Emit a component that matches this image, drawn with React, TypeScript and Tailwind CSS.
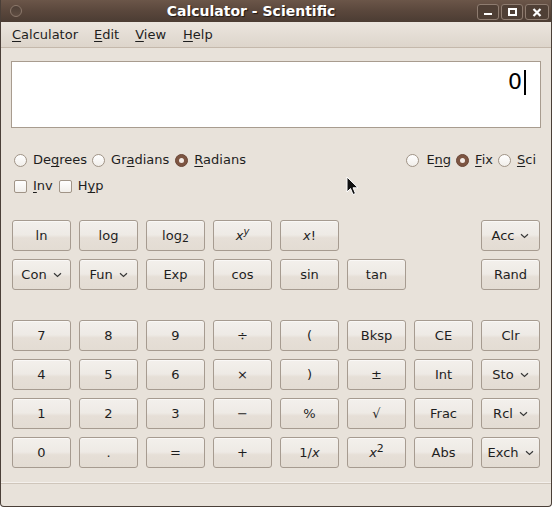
import React from 'react';

const font = "font-['DejaVu_Sans',sans-serif]";

const Chevron = () => (
  <svg width="9" height="6" viewBox="0 0 9 6" className="shrink-0">
    <path d="M1 1.2 L4.5 4.5 L8 1.2" fill="none" stroke="#3a3a3a" strokeWidth="1.2" />
  </svg>
);

const Btn = ({ children, drop = false }: { children: React.ReactNode; drop?: boolean }) => (
  <button className="h-[31px] rounded-[3px] border border-[#a69b90] bg-[linear-gradient(180deg,#f3f0ec_0%,#eeeae5_48%,#e6dfd7_58%,#e3dcd3_100%)] shadow-[inset_0_1px_0_#faf8f6] text-[13px] text-[#1e1e1e] flex items-center justify-center gap-[6px] leading-none">
    {children}
    {drop && <Chevron />}
  </button>
);

const Radio = ({ on = false }: { on?: boolean }) =>
  on ? (
    <span className="w-[13px] h-[13px] rounded-full bg-[#7d5542] border border-[#6a4636] flex items-center justify-center shrink-0">
      <span className="w-[5px] h-[5px] rounded-full bg-[#f3ebe6]" />
    </span>
  ) : (
    <span className="block w-[13px] h-[13px] rounded-full bg-[linear-gradient(180deg,#ffffff,#f1eeea)] border border-[#a09487] shrink-0" />
  );

const Check = () => (
  <span className="block w-[13px] h-[13px] rounded-[2px] bg-[linear-gradient(180deg,#ffffff,#f1eeea)] border border-[#a09487] shrink-0" />
);

const U = ({ children }: { children: React.ReactNode }) => <span className="underline underline-offset-2">{children}</span>;

const X = () => <i>x</i>;

export default function App() {
  return (
    <div className={`w-[552px] h-[507px] bg-white ${font}`}>
      <div className="relative w-full h-full flex flex-col bg-[#e8e2da] border-x border-b border-[#4a3f38] rounded-b-[4px] overflow-hidden">
        {/* title bar */}
        <div className="relative h-[22px] shrink-0 bg-[linear-gradient(180deg,#6b5649_0%,#5a473c_50%,#4b3c33_100%)] flex items-center justify-center">
          <span className="absolute left-[9px] top-[5px] w-[12px] h-[12px] rounded-full border border-[#8b786b] bg-[linear-gradient(180deg,#4e3f36,#5f4d42)]" />
          <span className="text-[14px] font-bold text-white [text-shadow:1px_1px_1px_#1e1612] ml-[-50px]">Calculator - Scientific</span>
          <div className="absolute right-[2px] top-[4px] flex gap-[2px]">
            <span className="w-[22px] h-[16px] rounded-[3px] border border-[#8e7c70] bg-[#4f3f35] flex items-end justify-center pb-[4px]">
              <span className="w-[8px] h-[2px] bg-white" />
            </span>
            <span className="w-[22px] h-[16px] rounded-[3px] border border-[#8e7c70] bg-[#4f3f35] flex items-center justify-center">
              <span className="w-[9px] h-[8px] border-2 border-white" />
            </span>
            <span className="w-[24px] h-[16px] rounded-[3px] border border-[#8e7c70] bg-[#4f3f35] flex items-center justify-center">
              <svg width="10" height="9" viewBox="0 0 10 9">
                <path d="M1.5 1 L8.5 8 M8.5 1 L1.5 8" stroke="white" strokeWidth="2.2" />
              </svg>
            </span>
          </div>
        </div>

        {/* menu bar */}
        <div className="h-[26px] shrink-0 bg-[linear-gradient(180deg,#ebe5de,#ddd5cb)] border-b border-[#c4b8ab] flex items-center text-[13px] text-[#1e1e1e]">
          <span className="ml-[11px]"><U>C</U>alculator</span>
          <span className="ml-[16px]"><U>E</U>dit</span>
          <span className="ml-[16px]"><U>V</U>iew</span>
          <span className="ml-[17px]"><U>H</U>elp</span>
        </div>

        <div className="flex flex-col px-[10px]">
          {/* display */}
          <div className="mt-[13px] h-[67px] bg-white border border-[#a89c8f] flex items-start justify-end pr-[14px] pt-[7px]">
            <span className="text-[22px] leading-[26px] text-black">0</span>
            <span className="w-[2px] h-[25px] bg-black ml-[2px] mt-[1px]" />
          </div>

          {/* radios */}
          <div className="mt-[23px] h-[18px] flex items-center text-[13px] text-[#1e1e1e] px-[3px]">
            <Radio />
            <span className="ml-[6px]">De<U>g</U>rees</span>
            <span className="ml-[5px]"><Radio /></span>
            <span className="ml-[6px]">Gr<U>a</U>dians</span>
            <span className="ml-[6px]"><Radio on /></span>
            <span className="ml-[6px]"><U>R</U>adians</span>
            <span className="flex-1" />
            <Radio />
            <span className="ml-[7px]">E<U>n</U>g</span>
            <span className="ml-[5px]"><Radio on /></span>
            <span className="ml-[6px]"><U>F</U>ix</span>
            <span className="ml-[5px]"><Radio /></span>
            <span className="ml-[6px] mr-[2px]"><U>S</U>ci</span>
          </div>
          <div className="mt-[8px] h-[18px] flex items-center text-[13px] text-[#1e1e1e] px-[3px]">
            <Check />
            <span className="ml-[6px]"><U>I</U>nv</span>
            <span className="ml-[6px]"><Check /></span>
            <span className="ml-[6px]">H<U>y</U>p</span>
          </div>

          {/* scientific buttons */}
          <div className="mt-[25px] px-[1px] grid grid-cols-8 gap-x-[8px] gap-y-[8px]">
            <Btn>ln</Btn>
            <Btn>log</Btn>
            <Btn><span>log<sub className="text-[11px] relative top-[2px]">2</sub></span></Btn>
            <Btn><span><X /><sup className="text-[10px] italic">y</sup></span></Btn>
            <Btn><span><X />!</span></Btn>
            <span />
            <span />
            <Btn drop>Acc</Btn>
            <Btn drop>Con</Btn>
            <Btn drop>Fun</Btn>
            <Btn>Exp</Btn>
            <Btn>cos</Btn>
            <Btn>sin</Btn>
            <Btn>tan</Btn>
            <span />
            <Btn>Rand</Btn>
          </div>

          {/* basic buttons */}
          <div className="mt-[30px] px-[1px] grid grid-cols-8 gap-x-[8px] gap-y-[8px]">
            <Btn>7</Btn>
            <Btn>8</Btn>
            <Btn>9</Btn>
            <Btn>÷</Btn>
            <Btn>(</Btn>
            <Btn>Bksp</Btn>
            <Btn>CE</Btn>
            <Btn>Clr</Btn>
            <Btn>4</Btn>
            <Btn>5</Btn>
            <Btn>6</Btn>
            <Btn>×</Btn>
            <Btn>)</Btn>
            <Btn>±</Btn>
            <Btn>Int</Btn>
            <Btn drop>Sto</Btn>
            <Btn>1</Btn>
            <Btn>2</Btn>
            <Btn>3</Btn>
            <Btn>−</Btn>
            <Btn>%</Btn>
            <Btn>√</Btn>
            <Btn>Frac</Btn>
            <Btn drop>Rcl</Btn>
            <Btn>0</Btn>
            <Btn>.</Btn>
            <Btn>=</Btn>
            <Btn>+</Btn>
            <Btn><span>1/<X /></span></Btn>
            <Btn><span><X /><sup className="text-[11px]">2</sup></span></Btn>
            <Btn>Abs</Btn>
            <Btn drop>Exch</Btn>
          </div>
        </div>

        {/* status bar */}
        <div className="mt-auto h-[23px] border-t border-[#cfc6bb] shadow-[0_-1px_0_#f4f0ec]" />

        {/* mouse pointer */}
        <svg className="absolute left-[345px] top-[176px]" width="14" height="21" viewBox="0 0 14 21">
          <path d="M1 1 L1 16 L4.5 12.5 L7 18.5 L9.5 17.5 L7 11.8 L12 11.8 Z" fill="#111" stroke="#fff" strokeWidth="1" strokeLinejoin="round" />
        </svg>
      </div>
    </div>
  );
}
